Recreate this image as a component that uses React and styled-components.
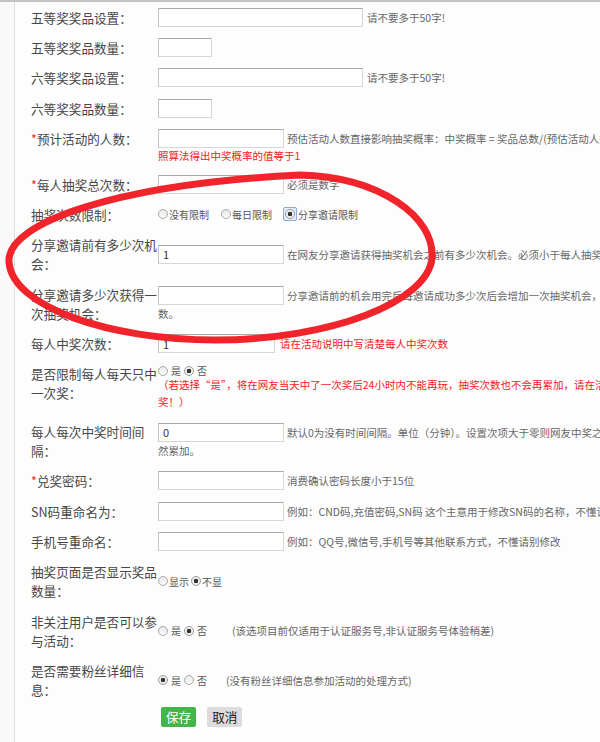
import React from 'react';
import styled, { createGlobalStyle } from 'styled-components';

const GlobalStyle = createGlobalStyle`
    html, body {
        margin: 0;
        overflow: hidden;
        background: #f9f9f9;
        font-family: "Noto Sans CJK SC", "Noto Sans", sans-serif;
    }
`

const Page = styled.div`
    position: relative;
    height: 742px;
    border-top: 2px solid #c2c2c2;
    box-sizing: border-box;
`

const Panel = styled.div`
    margin-left: 14px;
    height: 100%;
    padding-left: 16px;
    border-left: 1px solid #e0e0e0;
    background: #fdfdfd;
`

const Row = styled.div`
    display: flex;
    align-items: ${props => props.$top ? 'flex-start' : 'center'};
    padding: 5.7px 0;
`

const Label = styled.div`
    flex: 0 0 127px;
    width: 127px;
    font-size: 12.6px;
    line-height: 19px;
    color: #474747;
`

const Star = styled.span`
    color: #f22;
`

const Field = styled.div`
    flex: 0 0 720px;
    font-size: 10.5px;
    line-height: 19px;
    color: #666;
    white-space: nowrap;
`

const TextInput = styled.input`
    box-sizing: border-box;
    width: ${props => props.$width}px;
    height: 19px;
    margin: 0;
    padding: 0 4px;
    border: 1px solid #d6d6d6;
    border-top-color: #a8a8a8;
    border-left-color: #c4c4c4;
    background: #fff;
    font-family: inherit;
    font-size: 11px;
    color: #333;
    vertical-align: top;
    outline: none;
`

const Hint = styled.span`
    margin-left: ${props => props.$gap ?? 4}px;
    color: ${props => props.$red ? '#f42020' : '#666'};
    vertical-align: top;
`

const Line = styled.div`
    color: ${props => props.$red ? '#f42020' : '#666'};
    line-height: ${props => props.$lh ?? 17}px;
`

const Radio = styled.input.attrs({ type: 'radio' })`
    appearance: none;
    width: 10px;
    height: 10px;
    margin: 0;
    border: 1px solid #aaa;
    border-radius: 50%;
    background: linear-gradient(#e9e9e9, #fafafa);
    box-sizing: border-box;
    &:checked {
        background: radial-gradient(circle, #333 0 2px, #f2f2f2 2.6px);
        border-color: #999;
    }
`

const FocusRing = styled.span`
    display: inline-flex;
    padding: 1px;
    border: 1px solid #8eaadb;
    border-radius: 2px;
    background: #e2ebf8;
`

const RadioItem = styled.label`
    display: inline-flex;
    align-items: center;
    gap: ${props => props.$gap}px;
    margin-right: ${props => props.$space}px;
    font-size: 10px;
    color: #555;
    vertical-align: top;
`

const ButtonRow = styled.div`
    display: flex;
    gap: 11px;
    padding: 2px 0 0 130px;
`

const Button = styled.button`
    height: 20px;
    padding: 0 5px;
    border: none;
    border-radius: 2px;
    font-family: inherit;
    font-size: 12.6px;
    line-height: 20px;
    color: ${props => props.$primary ? '#fff' : '#222'};
    background: ${props => props.$primary ? '#44b549' : '#dcdcdc'};
`

const Scribble = styled.svg`
    position: absolute;
    left: 0;
    top: 0;
    pointer-events: none;
`

const Choice = ({ name, label, checked, gap = 1, space = 2, focus }) => (
    <RadioItem $gap={gap} $space={space}>
        {focus
            ? <FocusRing><Radio name={name} defaultChecked={checked} /></FocusRing>
            : <Radio name={name} defaultChecked={checked} />}
        {label}
    </RadioItem>
);

const App = () => {
    return (
        <Page>
            <GlobalStyle />
            <Panel>
                <Row>
                    <Label>五等奖奖品设置：</Label>
                    <Field>
                        <TextInput $width={205} />
                        <Hint>请不要多于50字!</Hint>
                    </Field>
                </Row>
                <Row>
                    <Label>五等奖奖品数量：</Label>
                    <Field><TextInput $width={54} /></Field>
                </Row>
                <Row>
                    <Label>六等奖奖品设置：</Label>
                    <Field>
                        <TextInput $width={205} />
                        <Hint>请不要多于50字!</Hint>
                    </Field>
                </Row>
                <Row>
                    <Label>六等奖奖品数量：</Label>
                    <Field><TextInput $width={54} /></Field>
                </Row>
                <Row $top>
                    <Label><Star>*</Star>预计活动的人数：</Label>
                    <Field>
                        <TextInput $width={126} />
                        <Hint $gap={3}>预估活动人数直接影响抽奖概率：中奖概率 = 奖品总数/(预估活动人数*每人抽奖总次数)，如果要确保100%中奖，可设置为1.按</Hint>
                        <Line $red $lh={15}>照算法得出中奖概率的值等于1</Line>
                    </Field>
                </Row>
                <Row>
                    <Label><Star>*</Star>每人抽奖总次数：</Label>
                    <Field>
                        <TextInput $width={126} />
                        <Hint $gap={3}>必须是数字</Hint>
                    </Field>
                </Row>
                <Row>
                    <Label>抽奖次数限制：</Label>
                    <Field>
                        <Choice name="limit" label="没有限制" space={12} />
                        <Choice name="limit" label="每日限制" space={11} />
                        <Choice name="limit" label="分享邀请限制" checked focus />
                    </Field>
                </Row>
                <Row>
                    <Label>分享邀请前有多少次机会：</Label>
                    <Field>
                        <TextInput $width={126} defaultValue="1" />
                        <Hint $gap={3}>在网友分享邀请获得抽奖机会之前有多少次机会。必须小于每人抽奖总次数</Hint>
                    </Field>
                </Row>
                <Row>
                    <Label>分享邀请多少次获得一次抽奖机会：</Label>
                    <Field>
                        <TextInput $width={126} />
                        <Hint $gap={3}>分享邀请前的机会用完后每邀请成功多少次后会增加一次抽奖机会，增加的次</Hint>
                        <Line>数。</Line>
                    </Field>
                </Row>
                <Row>
                    <Label>每人中奖次数：</Label>
                    <Field>
                        <TextInput $width={117} defaultValue="1" />
                        <Hint $red $gap={5}>请在活动说明中写清楚每人中奖次数</Hint>
                    </Field>
                </Row>
                <Row $top>
                    <Label>是否限制每人每天只中一次奖：</Label>
                    <Field>
                        <Line $lh={13}>
                            <Choice name="daily" label="是" gap={3} space={3} />
                            <Choice name="daily" label="否" checked gap={3} />
                        </Line>
                        <Line $red $lh={16.5}>（若选择“是”，将在网友当天中了一次奖后24小时内不能再玩，抽奖次数也不会再累加，请在活动说明中写清楚每人每天只能中一次</Line>
                        <Line $red $lh={16.5}>奖！）</Line>
                    </Field>
                </Row>
                <Row>
                    <Label>每人每次中奖时间间隔：</Label>
                    <Field>
                        <TextInput $width={126} defaultValue="0" />
                        <Hint $gap={3}>默认0为没有时间间隔。单位（分钟）。设置次项大于零则网友中奖之后在该时间内无法再次抽奖，抽奖次数依</Hint>
                        <Line>然累加。</Line>
                    </Field>
                </Row>
                <Row>
                    <Label><Star>*</Star>兑奖密码：</Label>
                    <Field>
                        <TextInput $width={126} />
                        <Hint $gap={3}>消费确认密码长度小于15位</Hint>
                    </Field>
                </Row>
                <Row>
                    <Label>SN码重命名为：</Label>
                    <Field>
                        <TextInput $width={126} />
                        <Hint $gap={3}>例如：CND码,充值密码,SN码 这个主意用于修改SN码的名称，不懂请别修改</Hint>
                    </Field>
                </Row>
                <Row>
                    <Label>手机号重命名：</Label>
                    <Field>
                        <TextInput $width={126} />
                        <Hint $gap={3}>例如：QQ号,微信号,手机号等其他联系方式，不懂请别修改</Hint>
                    </Field>
                </Row>
                <Row>
                    <Label>抽奖页面是否显示奖品数量：</Label>
                    <Field>
                        <Choice name="show" label="显示" />
                        <Choice name="show" label="不显" checked />
                    </Field>
                </Row>
                <Row>
                    <Label>非关注用户是否可以参与活动：</Label>
                    <Field>
                        <Choice name="follow" label="是" gap={3} space={3} />
                        <Choice name="follow" label="否" checked gap={3} />
                        <Hint $gap={23}>(该选项目前仅适用于认证服务号,非认证服务号体验稍差)</Hint>
                    </Field>
                </Row>
                <Row>
                    <Label>是否需要粉丝详细信息：</Label>
                    <Field>
                        <Choice name="detail" label="是" checked gap={3} space={3} />
                        <Choice name="detail" label="否" gap={3} />
                        <Hint $gap={17}>(没有粉丝详细信息参加活动的处理方式)</Hint>
                    </Field>
                </Row>
                <ButtonRow>
                    <Button $primary>保存</Button>
                    <Button>取消</Button>
                </ButtonRow>
            </Panel>
            <Scribble width="600" height="742" viewBox="0 0 600 742">
                <path
                    d="M 300 173 C 380 175, 435 215, 432 256 C 428 300, 330 338, 215 338 C 110 338, 12 305, 9 260 C 6 220, 120 182, 300 173 Z"
                    fill="none"
                    stroke="#f0242a"
                    strokeWidth="7"
                    strokeLinecap="round"
                />
            </Scribble>
        </Page>
    );
};

export default App;
